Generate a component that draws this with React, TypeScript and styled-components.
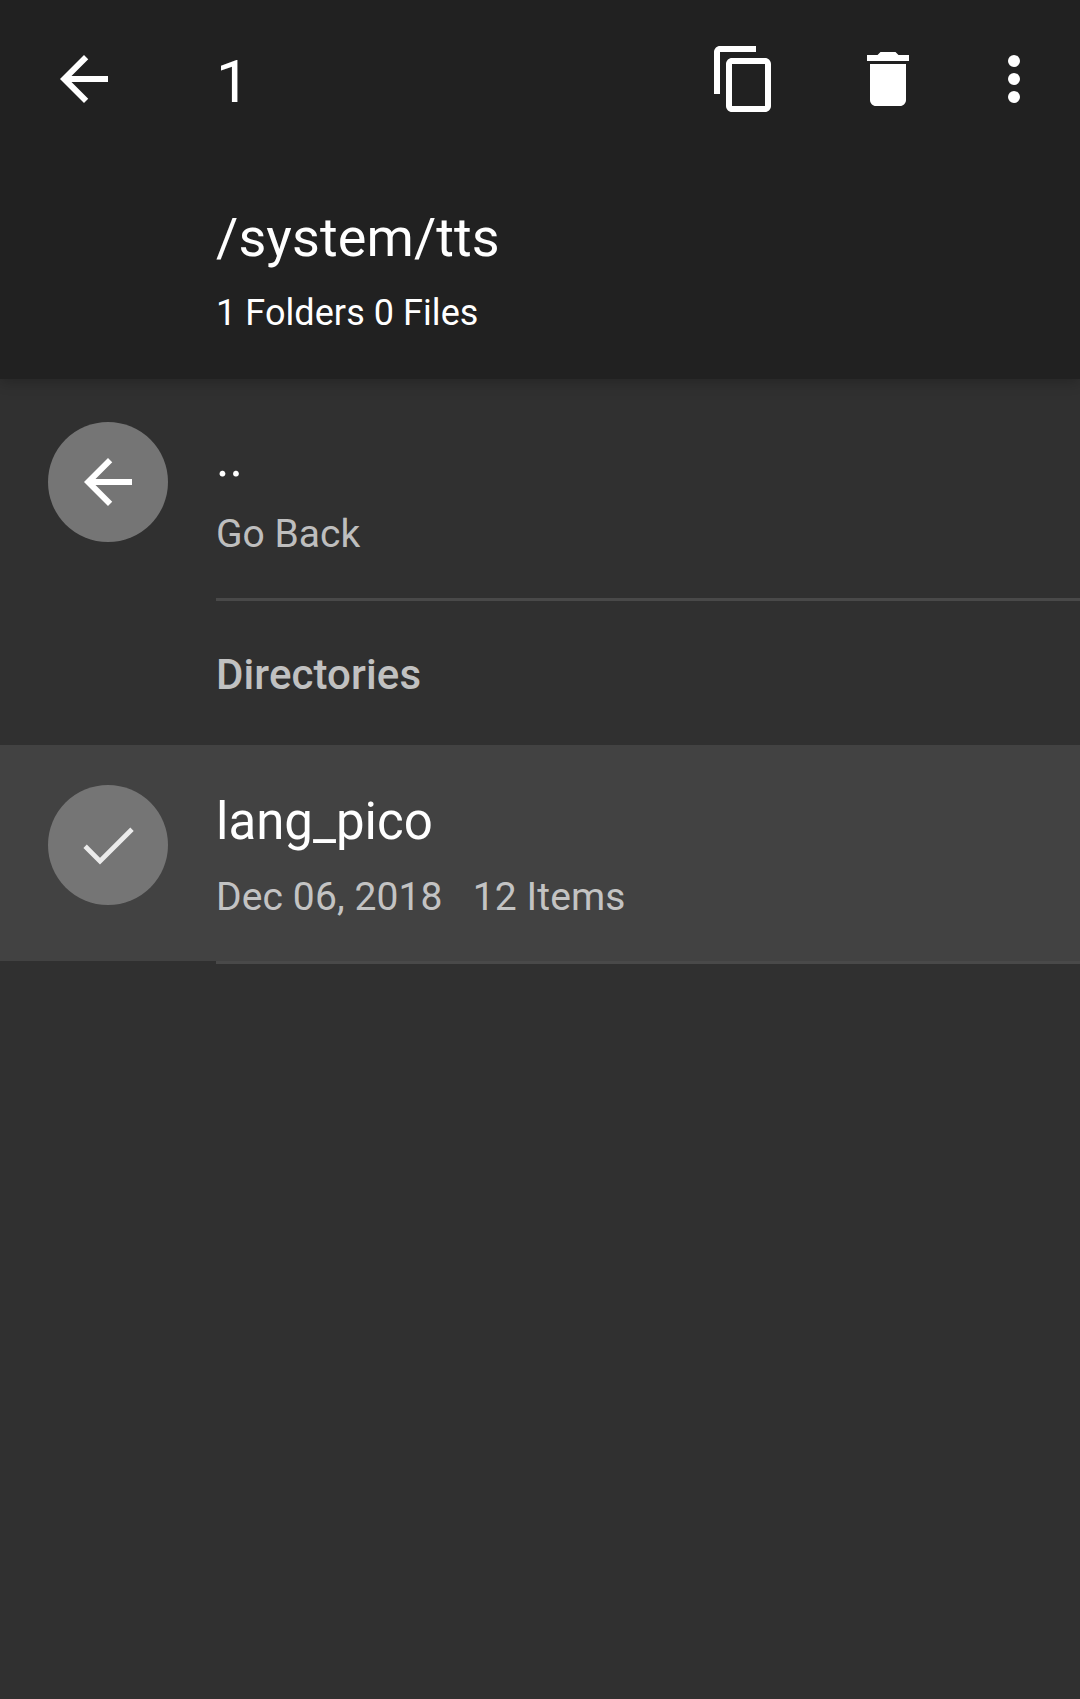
import React from "react";
import styled, { createGlobalStyle } from "styled-components";

const GlobalStyle = createGlobalStyle`
  * { box-sizing: border-box; }
  body { margin: 0; background: #303030; font-family: Roboto, "Noto Sans", sans-serif; }
`;

const Screen = styled.div`
  display: flex;
  flex-direction: column;
  min-height: 1699px;
  background: #303030;
  color: #fff;
`;

const Header = styled.header`
  height: 379px;
  background: #212121;
  box-shadow: 0 4px 12px rgba(0, 0, 0, 0.2);
`;

const Toolbar = styled.div`
  display: flex;
  align-items: center;
  height: 158px;
  padding: 0 30px 0 48px;
`;

const Icon = styled.svg`
  display: block;
  flex: none;
  width: 72px;
  height: 72px;
  fill: currentColor;
`;

const Count = styled.span`
  flex: 1;
  padding: 5px 0 0 96px;
  font-size: 60px;
  line-height: 70px;
`;

const Actions = styled.div`
  display: flex;
  gap: 72px;
`;

const Overflow = styled.div`
  margin-left: 54px;
`;

const Location = styled.div`
  padding: 44px 0 0 216px;
`;

const Path = styled.div`
  font-size: 54px;
  line-height: 72px;
  letter-spacing: 0.1px;
`;

const Summary = styled.div`
  margin-top: 15px;
  font-size: 36px;
  line-height: 48px;
  letter-spacing: 0.07px;
`;

const List = styled.main`
  display: flex;
  flex-direction: column;
  padding-top: 3px;
`;

const Row = styled.div<{ $selected?: boolean }>`
  display: flex;
  height: 216px;
  padding: 40px 0 0 48px;
  gap: 48px;
  background: ${(p) => (p.$selected ? "#424242" : "transparent")};
`;

const Avatar = styled.div`
  display: flex;
  flex: none;
  align-items: center;
  justify-content: center;
  width: 120px;
  height: 120px;
  border-radius: 50%;
  background: #757575;
`;

const Name = styled.div`
  padding-top: 7px;
  font-size: 51px;
  line-height: 60px;
`;

const Meta = styled.div`
  display: flex;
  gap: 30px;
  margin-top: 22px;
  font-size: 39px;
  line-height: 46px;
  color: rgba(255, 255, 255, 0.7);
`;

const Detail = styled.span`
  letter-spacing: 0.12px;
`;

const Divider = styled.div`
  height: 3px;
  margin-left: 216px;
  background: #494949;
`;

const Section = styled.h2`
  height: 144px;
  margin: 0;
  padding: 49px 0 0 216px;
  font-size: 42px;
  font-weight: 500;
  line-height: 50px;
  letter-spacing: 0.1px;
  color: #c1c1c1;
`;

const ArrowBack = () => (
  <Icon viewBox="0 0 24 24">
    <path d="M20 11H7.83l5.59-5.59L12 4l-8 8 8 8 1.41-1.41L7.83 13H20v-2z" />
  </Icon>
);

const Copy = () => (
  <Icon viewBox="0 0 24 24">
    <path d="M16 1H4c-1.100 0-2 .9-2 2v14h2V3h12V1zm3 4H8c-1.100 0-2 .9-2 2v14c0 1.100.9 2 2 2h11c1.100 0 2-.9 2-2V7c0-1.100-.9-2-2-2zm0 16H8V7h11v14z" />
  </Icon>
);

const Trash = () => (
  <Icon viewBox="0 0 24 24">
    <path d="M6 19c0 1.100.9 2 2 2h8c1.100 0 2-.9 2-2V7H6v12zM19 4h-3.500l-1-1h-5l-1 1H5v2h14V4z" />
  </Icon>
);

const More = () => (
  <Icon viewBox="0 0 24 24">
    <circle cx="12" cy="6" r="2" />
    <circle cx="12" cy="12" r="2" />
    <circle cx="12" cy="18" r="2" />
  </Icon>
);

const Check = () => (
  <Icon viewBox="0 0 72 72">
    <path d="M13.100 37.300L28 52.200L60 20.200" fill="none" stroke="#ebebeb" strokeWidth="4.800" />
  </Icon>
);

export default function App() {
  return (
    <Screen>
      <GlobalStyle />
      <Header>
        <Toolbar>
          <ArrowBack />
          <Count>1</Count>
          <Actions>
            <Copy />
            <Trash />
          </Actions>
          <Overflow>
            <More />
          </Overflow>
        </Toolbar>
        <Location>
          <Path>/system/tts</Path>
          <Summary>1 Folders 0 Files</Summary>
        </Location>
      </Header>
      <List>
        <Row>
          <Avatar>
            <ArrowBack />
          </Avatar>
          <div>
            <Name>..</Name>
            <Meta>
              <span>Go Back</span>
            </Meta>
          </div>
        </Row>
        <Divider />
        <Section>Directories</Section>
        <Row $selected>
          <Avatar>
            <Check />
          </Avatar>
          <div>
            <Name>lang_pico</Name>
            <Meta>
              <Detail>Dec 06, 2018</Detail>
              <Detail>12 Items</Detail>
            </Meta>
          </div>
        </Row>
        <Divider />
      </List>
    </Screen>
  );
}
